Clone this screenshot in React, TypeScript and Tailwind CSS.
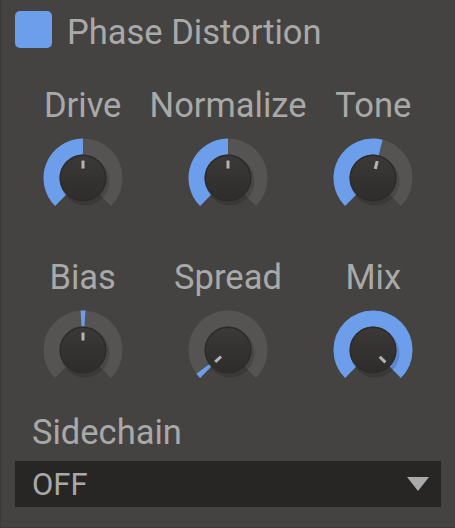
import React from "react";

const BLUE = "#6d9eec";
const TRACK = "#555452";

function pt(cx: number, cy: number, r: number, a: number) {
  const rad = (a * Math.PI) / 180;
  return [cx + r * Math.sin(rad), cy - r * Math.cos(rad)];
}

function arc(cx: number, cy: number, r: number, a0: number, a1: number) {
  const [x0, y0] = pt(cx, cy, r, a0);
  const [x1, y1] = pt(cx, cy, r, a1);
  const large = a1 - a0 > 180 ? 1 : 0;
  return `M ${x0} ${y0} A ${r} ${r} 0 ${large} 1 ${x1} ${y1}`;
}

function Knob({ from, to, ind }: { from: number; to: number; ind: number }) {
  const c = 45;
  const [ix0, iy0] = pt(c, c, 9.5, ind);
  const [ix1, iy1] = pt(c, c, 17.5, ind);
  return (
    <svg width="90" height="90" viewBox="0 0 90 90">
      <defs>
        <linearGradient id="kg" x1="0" y1="0" x2="0" y2="1">
          <stop offset="0" stopColor="#3a3938" />
          <stop offset="1" stopColor="#2e2d2c" />
        </linearGradient>
      </defs>
      <path d={arc(c, c, 31.5, -135, 135)} stroke={TRACK} strokeWidth="16" fill="none" />
      {to > from && (
        <path d={arc(c, c, 31.5, from, to)} stroke={BLUE} strokeWidth="16" fill="none" />
      )}
      <circle cx={c + 2} cy={c + 3} r="24.5" fill="rgba(0,0,0,0.15)" />
      <circle cx={c} cy={c} r="23.5" fill="#2c2b2a" />
      <circle cx={c} cy={c} r="22" fill="url(#kg)" />
      <line x1={ix0} y1={iy0} x2={ix1} y2={iy1} stroke="#b3b3b3" strokeWidth="3" />
    </svg>
  );
}

function Cell({ label, from, to, ind }: { label: string; from: number; to: number; ind: number }) {
  return (
    <div className="flex flex-col items-center">
      <div className="h-[40px] leading-[40px] text-[34.5px] whitespace-nowrap">{label}</div>
      <div className="mt-[8px]">
        <Knob from={from} to={to} ind={ind} />
      </div>
    </div>
  );
}

export default function App() {
  return (
    <div
      className="w-[455px] h-[528px] bg-[#444341] border-l border-b border-[#3a3937] text-[#a9a9a9] overflow-hidden"
      style={{ fontFamily: "Roboto, 'Noto Sans', sans-serif" }}
    >
      <div className="flex items-start pt-[11px] pl-[14px]">
        <div className="w-[37px] h-[37px] rounded-[5px] bg-[#6d9eec]" />
        <div className="ml-[15px] mt-[1px] h-[40px] leading-[40px] text-[34.5px]">Phase Distortion</div>
      </div>
      <div className="grid grid-cols-3 px-[9px] mt-[33px]">
        <Cell label="Drive" from={-135} to={0} ind={0} />
        <Cell label="Normalize" from={-135} to={0} ind={0} />
        <Cell label="Tone" from={-135} to={14} ind={14} />
      </div>
      <div className="grid grid-cols-3 px-[9px] mt-[34px]">
        <Cell label="Bias" from={-3.5} to={3.5} ind={0} />
        <Cell label="Spread" from={-135} to={-127} ind={-133} />
        <Cell label="Mix" from={-135} to={135} ind={135} />
      </div>
      <div className="pl-[31px] mt-[17px] h-[40px] leading-[40px] text-[34.5px]">Sidechain</div>
      <div className="ml-[14px] mt-[9px] w-[426px] h-[46px] bg-[#272625] flex items-center justify-between pl-[17px] pr-[12px]">
        <span className="text-[31px] leading-none">OFF</span>
        <svg width="22" height="14" viewBox="0 0 22 14">
          <polygon points="0,0 22,0 11,14" fill="#aaaaaa" />
        </svg>
      </div>
    </div>
  );
}
